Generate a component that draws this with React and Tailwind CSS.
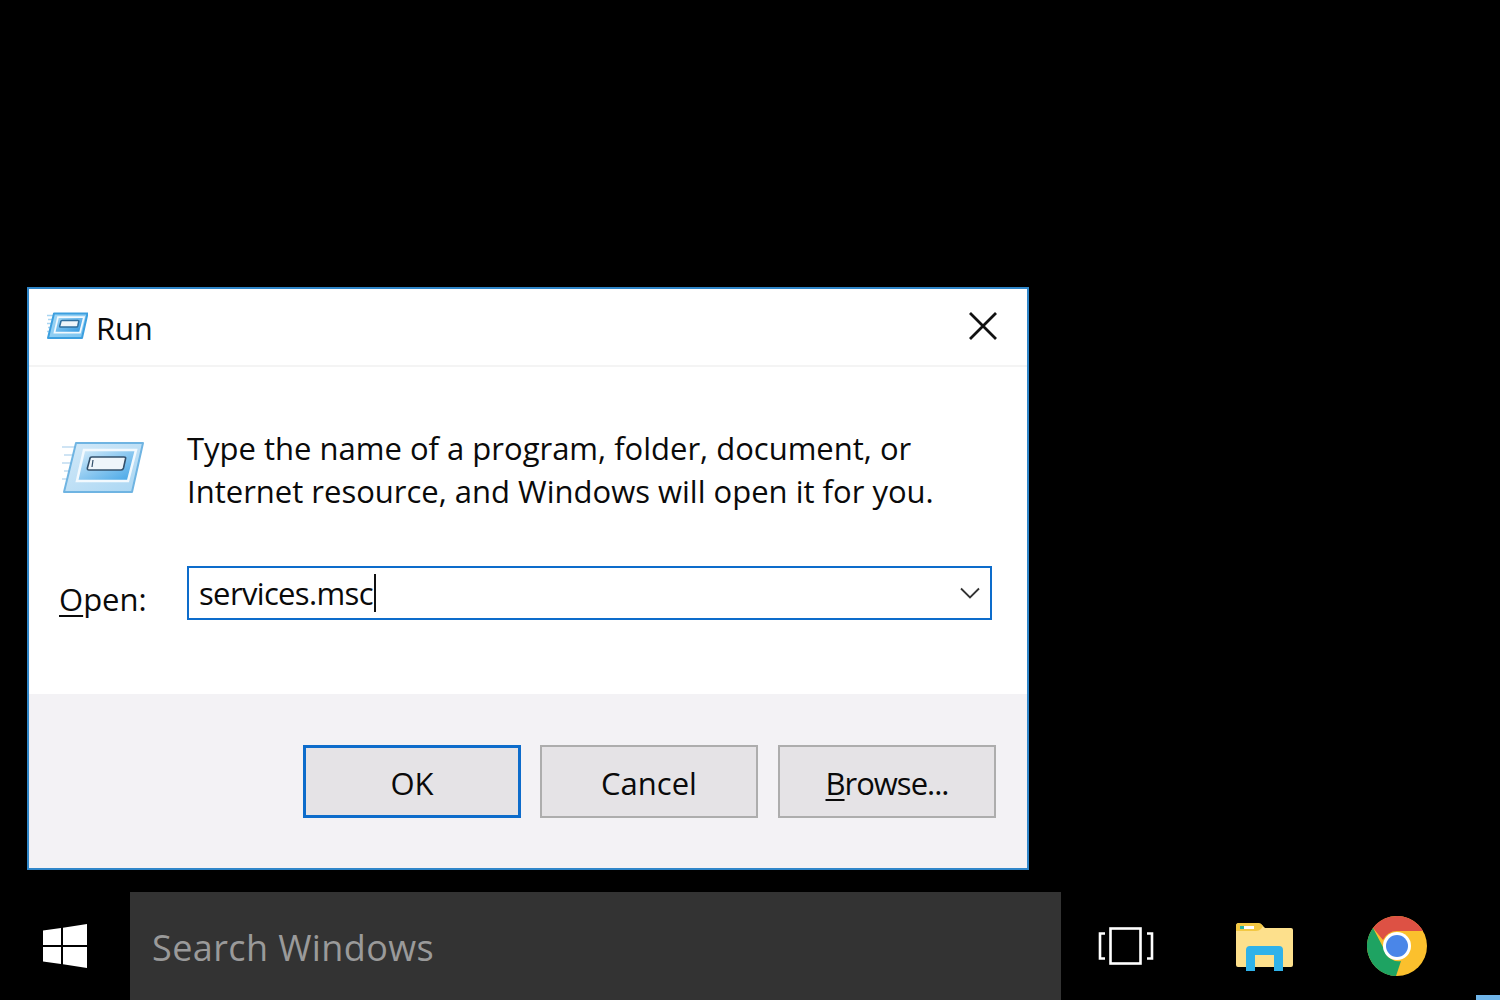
import React from "react";

function RunIcon({ className, uid, small }) {
  return (
    <svg viewBox="0 0 84 56" className={className} fill="none">
      <defs>
        <linearGradient id={`a${uid}`} x1="0" y1="0" x2="1" y2="1">
          <stop offset="0" stopColor={small ? "#9fd6f5" : "#d3e9f8"} />
          <stop offset="1" stopColor={small ? "#7cc4f0" : "#a9d6f3"} />
        </linearGradient>
        <linearGradient id={`b${uid}`} x1="0" y1="0" x2="1" y2="1">
          <stop offset="0" stopColor={small ? "#a8dbf7" : "#d6ecfa"} />
          <stop offset="1" stopColor={small ? "#2b94df" : "#3fa3e6"} />
        </linearGradient>
      </defs>
      <g stroke={small ? "#a9d5f2" : "#cfe4f4"} strokeWidth={small ? 3 : 1.8}>
        <path d="M2 7H20M4 15H18M2 23H16M4 31H14M2 39H12" />
      </g>
      <path d="M16 3H83L72 52H4Z" fill={`url(#a${uid})`} stroke={small ? "#3c9fdf" : "#6fb4e2"} strokeWidth={small ? 4 : 2} strokeLinejoin="round" />
      <path d="M24 10H76L68 41H17Z" fill={`url(#b${uid})`} stroke="#f2f9fe" strokeWidth={small ? 3.500 : 2.500} />
      <path d="M30 18.500Q30 17 32 17H64Q66 17 65.600 18.500L63.500 28Q63 30 61 30H29Q27 30 27.400 28Z" fill="#eef5fa" stroke={small ? "#2f6f9f" : "#33506b"} strokeWidth={small ? 3 : 1.600} />
      {!small && <path d="M33 20L32 27" stroke="#33506b" strokeWidth="1.200" />}
    </svg>
  );
}

function WindowsLogo() {
  return (
    <svg viewBox="0 0 44 44" className="w-[44px] h-[44px]" fill="#fff">
      <path d="M0 6.500L18 4V21H0ZM20 3.700L44 0V21H20ZM0 23H18V40L0 37.500ZM20 23H44V44L20 40.300Z" />
    </svg>
  );
}

function TaskView() {
  return (
    <svg viewBox="0 0 56 38" className="w-[56px] h-[38px]" fill="none" stroke="#fff" strokeWidth="2.600">
      <rect x="12.500" y="1.500" width="30" height="35" />
      <path d="M7 6.500H2V31.500H7M49 6.500H54V31.500H49" />
    </svg>
  );
}

function Folder() {
  return (
    <svg viewBox="0 0 58 48" className="w-[58px] h-[48px]">
      <path d="M0 3Q0 0 3 0H22Q25 0 27 3L29 5H55Q57 5 57 7V42Q57 44 55 44H2Q0 44 0 42Z" fill="#fde08c" />
      <path d="M0 3Q0 0 3 0H22Q25 0 27 3L25 6Q23 8 20 8H0Z" fill="#f3c843" />
      <rect x="4" y="3" width="4" height="3" fill="#2bb5a0" />
      <rect x="8" y="3" width="10" height="3" fill="#fff" />
      <path d="M10 48V27Q10 23 14 23H43Q47 23 47 27V48H38V32H19V48Z" fill="#2fb2ea" />
    </svg>
  );
}

function Chrome() {
  return (
    <svg viewBox="0 0 60 60" className="w-[60px] h-[60px]">
      <circle cx="30" cy="30" r="30" fill="#fbc02d" />
      <path d="M30 0A30 30 0 0 1 56 15H30A15 15 0 0 0 16 24L6 12A30 30 0 0 1 30 0Z" fill="#dd5144" />
      <path d="M6 12L17 33A15 15 0 0 0 34 45L29 60A30 30 0 0 1 6 12Z" fill="#1ea362" />
      <circle cx="30" cy="30" r="14" fill="#fff" />
      <circle cx="30" cy="30" r="11" fill="#4a86e8" />
    </svg>
  );
}

function DialogButton({ children, primary }) {
  return (
    <button
      className={
        primary
          ? "w-[218px] h-[73px] -mr-[1px] bg-[#e5e3e6] border-[3px] border-[#0d6ccb] text-[31px] text-[#0a0a0a] pt-[4px]"
          : "w-[218px] h-[73px] bg-[#e5e3e6] border-2 border-[#adadad] text-[31px] text-[#0a0a0a] pt-[4px]"
      }
    >
      {children}
    </button>
  );
}

export default function App() {
  return (
    <div className="w-[1500px] h-[1000px] bg-black overflow-hidden relative flex flex-col font-['Open_Sans','Noto_Sans',sans-serif]">
      <div className="pt-[287px] pl-[27px]">
        <div className="w-[1002px] h-[583px] border-2 border-[#2f86c9] bg-white flex flex-col">
          <div className="h-[78px] shrink-0 border-b-2 border-[#f4f4f4] flex items-center pl-[17px] pr-[29px]">
            <RunIcon className="w-[42px] h-[28px] -mt-[2px]" uid="s" small />
            <span className="ml-[8px] text-[31px] tracking-[-0.2px] text-[#0a0a0a] leading-none mt-[3px]">Run</span>
            <svg viewBox="0 0 30 30" className="w-[30px] h-[30px] ml-auto -mt-[2px]" stroke="#111" strokeWidth="2.800">
              <path d="M2 2L28 28M28 2L2 28" />
            </svg>
          </div>
          <div className="flex-1 pt-[60px] pl-[30px] pr-[34px]">
            <div className="flex">
              <RunIcon className="w-[86px] h-[56px] mt-[13px]" uid="l" />
              <p className="ml-[42px] text-[31px] leading-[43px] text-[#0a0a0a] whitespace-nowrap">
                Type the name of a program, folder, document, or
                <br />
                Internet resource, and Windows will open it for you.
              </p>
            </div>
            <div className="flex items-center mt-[51px]">
              <label className="w-[128px] text-[31px] text-[#0a0a0a] mt-[12px]">
                <span className="underline underline-offset-[4px] decoration-2">O</span>pen:
              </label>
              <div className="w-[805px] h-[54px] border-2 border-[#0d6ccb] flex items-center pl-[10px] pr-[10px]">
                <span className="text-[31px] tracking-[-0.65px] text-[#0a0a0a] leading-none">services.msc</span>
                <span className="w-[2px] h-[38px] bg-[#111] ml-[1px]"></span>
                <svg viewBox="0 0 20 12" className="w-[20px] h-[12px] ml-auto" fill="none" stroke="#333" strokeWidth="1.800">
                  <path d="M1 1.500L10 10.500L19 1.500" />
                </svg>
              </div>
            </div>
          </div>
          <div className="h-[174px] shrink-0 bg-[#f3f2f5] pt-[51px] pr-[31px] flex justify-end gap-[20px]">
            <DialogButton primary>OK</DialogButton>
            <DialogButton>Cancel</DialogButton>
            <DialogButton>
              <span className="tracking-[-1px]">
                <span className="underline underline-offset-[4px] decoration-2">B</span>rowse...
              </span>
            </DialogButton>
          </div>
        </div>
      </div>
      <div className="mt-[22px] h-[108px] flex">
        <div className="w-[130px] shrink-0 pt-[32px] pl-[43px]">
          <WindowsLogo />
        </div>
        <div className="w-[931px] shrink-0 bg-[#333333] flex items-center pl-[22px] pt-[4px]">
          <span className="text-[36px] tracking-[0.4px] text-[#9a9a9a]">Search Windows</span>
        </div>
        <div className="pl-[37px] pt-[35px]">
          <TaskView />
        </div>
        <div className="pl-[82px] pt-[31px]">
          <Folder />
        </div>
        <div className="pl-[73px] pt-[24px]">
          <Chrome />
        </div>
      </div>
      <div className="absolute right-0 bottom-0 w-[24px] h-[5px] bg-[#6fb5ea]"></div>
    </div>
  );
}
